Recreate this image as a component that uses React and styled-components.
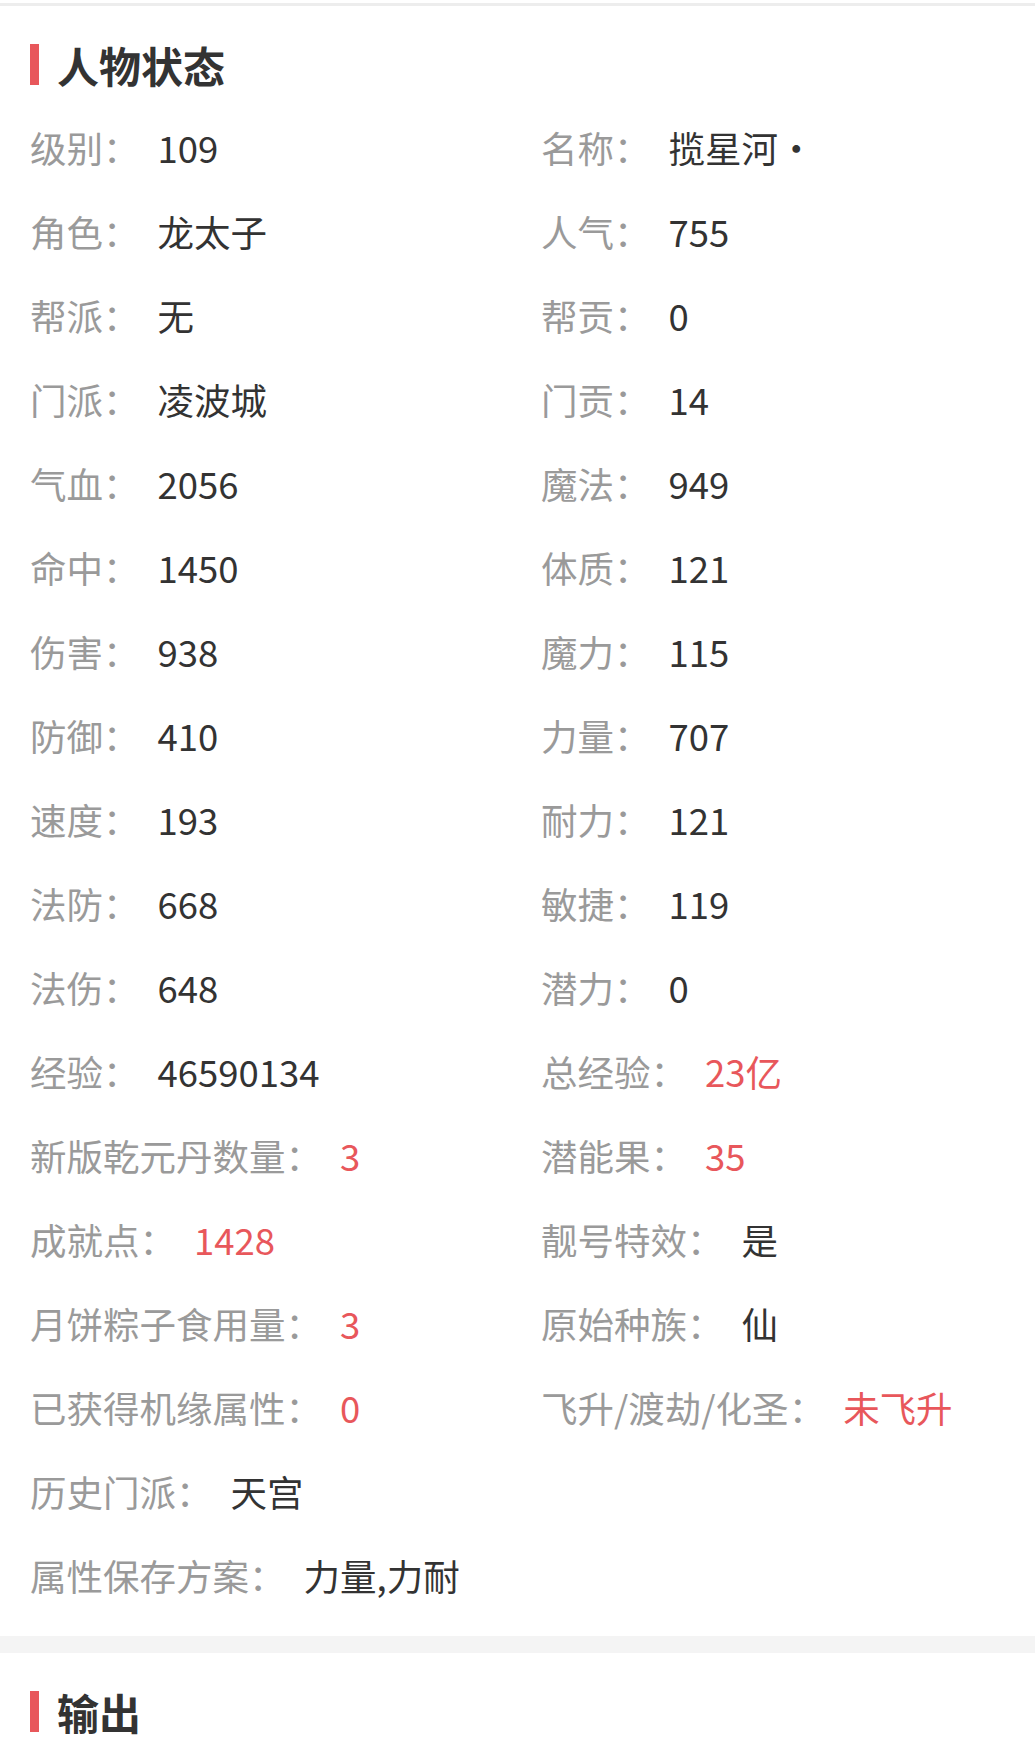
import styled, { createGlobalStyle } from "styled-components";

const GlobalStyle = createGlobalStyle`
  body {
    margin: 0;
    background: #fff;
    font-family: "Noto Sans CJK SC", "Noto Sans", sans-serif;
  }
`;

const roleStats = [
  [{ label: "级别", value: "109" }, { label: "名称", value: "揽星河·" }],
  [{ label: "角色", value: "龙太子" }, { label: "人气", value: "755" }],
  [{ label: "帮派", value: "无" }, { label: "帮贡", value: "0" }],
  [{ label: "门派", value: "凌波城" }, { label: "门贡", value: "14" }],
  [{ label: "气血", value: "2056" }, { label: "魔法", value: "949" }],
  [{ label: "命中", value: "1450" }, { label: "体质", value: "121" }],
  [{ label: "伤害", value: "938" }, { label: "魔力", value: "115" }],
  [{ label: "防御", value: "410" }, { label: "力量", value: "707" }],
  [{ label: "速度", value: "193" }, { label: "耐力", value: "121" }],
  [{ label: "法防", value: "668" }, { label: "敏捷", value: "119" }],
  [{ label: "法伤", value: "648" }, { label: "潜力", value: "0" }],
  [
    { label: "经验", value: "46590134" },
    { label: "总经验", value: "23亿", hot: true },
  ],
  [
    { label: "新版乾元丹数量", value: "3", hot: true },
    { label: "潜能果", value: "35", hot: true },
  ],
  [
    { label: "成就点", value: "1428", hot: true },
    { label: "靓号特效", value: "是" },
  ],
  [
    { label: "月饼粽子食用量", value: "3", hot: true },
    { label: "原始种族", value: "仙" },
  ],
  [
    { label: "已获得机缘属性", value: "0", hot: true },
    { label: "飞升/渡劫/化圣", value: "未飞升", hot: true },
  ],
  [{ label: "历史门派", value: "天宫" }, null],
  [{ label: "属性保存方案", value: "力量,力耐" }, null],
];

const App = () => {
  return (
    <Page>
      <GlobalStyle />
      <TopRule />

      <Section>
        <SectionTitle>人物状态</SectionTitle>
        <StatGrid>
          {roleStats.map((row, i) =>
            row.map((item, j) =>
              item ? (
                <Stat key={`${i}-${j}`}>
                  <Label>{item.label}：</Label>
                  <Value $hot={item.hot}>{item.value}</Value>
                </Stat>
              ) : (
                <Stat key={`${i}-${j}`} />
              )
            )
          )}
        </StatGrid>
      </Section>

      <Band />

      <Section>
        <SectionTitle>输出</SectionTitle>
      </Section>
    </Page>
  );
};

const Page = styled.div`
  background: #fff;
  padding-top: 3px;
`;

const TopRule = styled.div`
  height: 3px;
  background: #ededed;
`;

const Section = styled.section`
  padding: 38px 30px 19px;
`;

const SectionTitle = styled.h2`
  display: flex;
  align-items: center;
  margin: 0 0 20px;
  height: 41px;
  font-size: 42px;
  font-weight: bold;
  color: #333;
  line-height: 41px;

  &::before {
    content: "";
    width: 9px;
    height: 41px;
    margin-right: 18px;
    background: #e8575b;
  }
`;

const StatGrid = styled.div`
  display: grid;
  grid-template-columns: 511px 1fr;
  grid-auto-rows: 84px;
`;

const Stat = styled.div`
  display: flex;
  align-items: center;
  font-size: 36.5px;
  white-space: nowrap;
`;

const Label = styled.span`
  color: #9a9a9a;
`;

const Value = styled.span`
  margin-left: 18px;
  color: ${(p) => (p.$hot ? "#e8575b" : "#333")};
`;

const Band = styled.div`
  height: 17px;
  background: #f4f4f4;
`;

export default App;
